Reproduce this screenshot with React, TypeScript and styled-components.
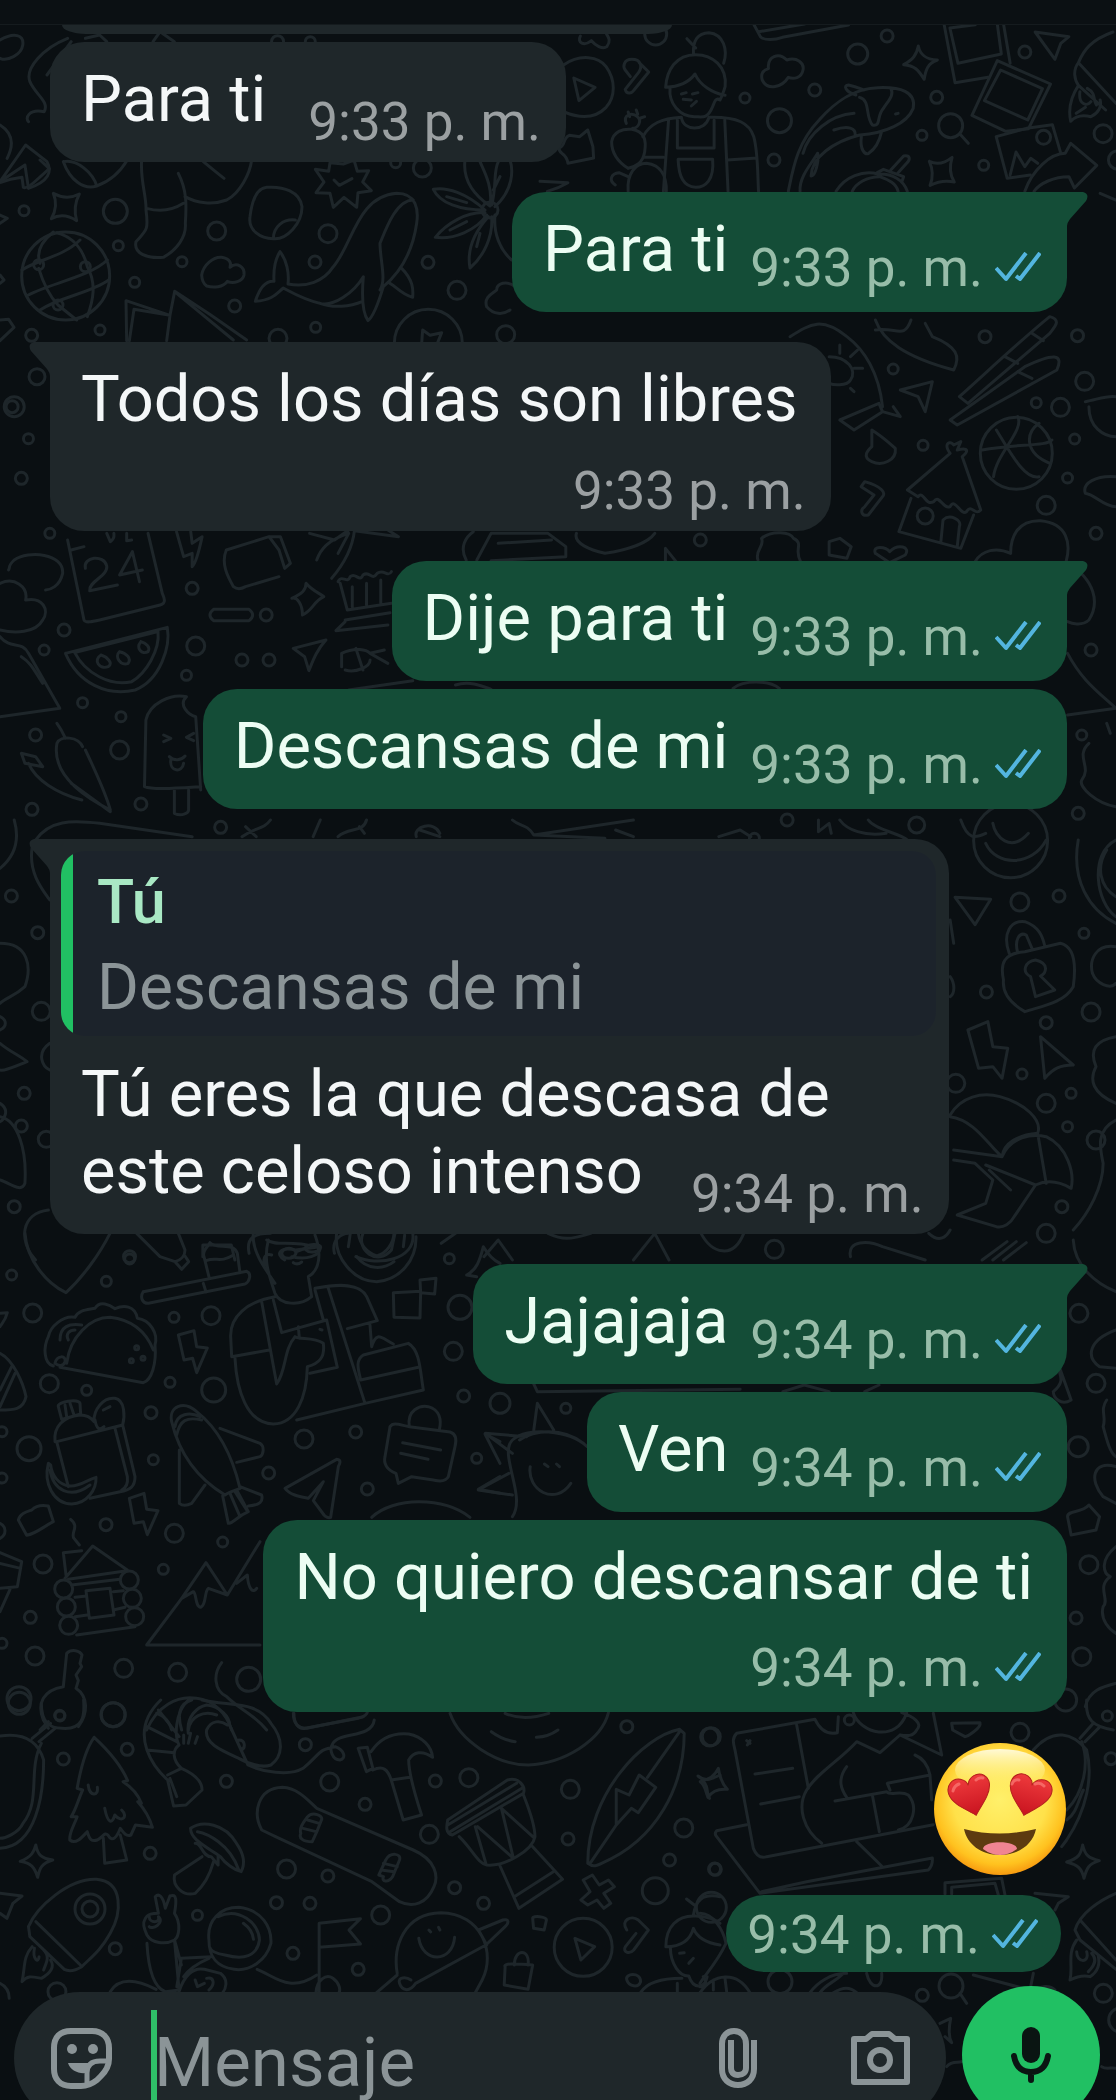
import React from "react";
import styled, { createGlobalStyle, css } from "styled-components";

const color = {
  page: "#0a0f12",
  line: "#1e262a",
  incoming: "#1f272a",
  outgoing: "#144d37",
  quote: "#1c232b",
  accent: "#21c063",
  tick: "#53b5df",
  textIn: "#f4f7f8",
  textOut: "#ecfdf3",
  timeIn: "#9ba0a2",
  timeOut: "#98bda9",
  muted: "#8b9497",
};

const GlobalStyle = createGlobalStyle`
  * { box-sizing: border-box; }
  body {
    margin: 0;
    background: ${color.page};
    font-family: Roboto, "Noto Sans", sans-serif;
  }
`;

const Screen = styled.div`
  position: relative;
  display: flex;
  flex-direction: column;
  height: 100vh;
  overflow: hidden;
  background: ${color.page};
`;

const WallpaperArt = styled.svg`
  position: absolute;
  inset: 0;
  width: 100%;
  height: 100%;
  fill: none;
  stroke: ${color.line};
  stroke-width: 3;
  stroke-linecap: round;
  stroke-linejoin: round;
`;

const TopEdge = styled.header`
  position: relative;
  flex: none;
  height: 25px;
  background: #0b1013;
  border-bottom: 1px solid #151b1e;
`;

const Thread = styled.main`
  position: relative;
  flex: none;
  display: flex;
  flex-direction: column;
  gap: 30px;
  padding: 0 49px 0 50px;
`;

const Group = styled.section<{ $mine?: boolean }>`
  display: flex;
  flex-direction: column;
  gap: 8px;
  align-items: ${(p) => (p.$mine ? "flex-end" : "flex-start")};
`;

const ScrolledBubble = styled.div`
  width: 60%;
  height: 9px;
  margin-left: 12px;
  border-radius: 0 0 24px 24px / 0 0 9px 9px;
  background: ${color.incoming};
`;

const BubbleBox = styled.article<{ $mine?: boolean; $tail?: boolean }>`
  position: relative;
  display: flex;
  flex-direction: column;
  border-radius: 34px;
  ${(p) =>
    p.$mine
      ? css`
          padding: 19px 26px 12px 31px;
          background: ${color.outgoing};
          color: ${color.textOut};
          border-top-right-radius: ${p.$tail ? 0 : 34}px;
        `
      : css`
          padding: 19px 25px 8px 31px;
          background: ${color.incoming};
          color: ${color.textIn};
          border-top-left-radius: ${p.$tail ? 0 : 34}px;
        `}
`;

const TailShape = styled.svg<{ $mine?: boolean }>`
  position: absolute;
  top: 0;
  ${(p) => (p.$mine ? "left: 100%;" : "right: 100%; transform: scaleX(-1);")}
  width: 21px;
  height: 34px;
  fill: ${(p) => (p.$mine ? color.outgoing : color.incoming)};
`;

const Body = styled.div<{ $mine?: boolean; $stacked?: boolean; $wide?: boolean }>`
  display: flex;
  flex-direction: ${(p) => (p.$stacked ? "column" : "row")};
  align-items: flex-end;
  justify-content: space-between;
  column-gap: ${(p) => (p.$mine ? 22 : p.$wide ? 48 : 42)}px;
  row-gap: ${(p) => (p.$mine ? 9 : 6)}px;
`;

const Words = styled.p<{ $mine?: boolean; $last?: boolean }>`
  margin: 0;
  font-size: 65px;
  line-height: 77px;
  white-space: nowrap;
  padding-bottom: ${(p) => (p.$last ? (p.$mine ? 12 : 16) : 0)}px;
`;

const StackedWords = styled(Words)`
  align-self: flex-start;
  padding-right: 8px;
`;

const Stamp = styled.footer<{ $mine?: boolean }>`
  display: flex;
  align-items: center;
  gap: 12px;
  font-size: 53px;
  line-height: 63px;
  white-space: nowrap;
  color: ${(p) => (p.$mine ? color.timeOut : color.timeIn)};
`;

const TickArt = styled.svg`
  width: 46px;
  height: 30px;
  margin-bottom: 3px;
  fill: none;
  stroke: ${color.tick};
  stroke-width: 4;
  stroke-linejoin: round;
`;

const Quote = styled.blockquote`
  display: flex;
  flex-direction: column;
  gap: 10px;
  margin: -7px -12px 20px -20px;
  padding: 13px 25px 10px 36px;
  border-radius: 24px;
  background: linear-gradient(to right, ${color.accent} 12px, ${color.quote} 12px);
`;

const QuoteAuthor = styled.cite`
  font-size: 61px;
  font-style: normal;
  font-weight: 500;
  line-height: 76px;
  color: #a9e8c4;
`;

const QuoteText = styled.p`
  margin: 0;
  font-size: 64px;
  line-height: 76px;
  color: ${color.muted};
`;

const Emoji = styled.svg`
  display: block;
  width: 134px;
  height: 134px;
`;

const TimePill = styled.div`
  margin: 11px 6px 0 0;
  padding: 9px 23px 5px 21px;
  border-radius: 39px;
  background: ${color.outgoing};
`;

const Composer = styled.form`
  position: relative;
  flex: none;
  display: flex;
  align-items: flex-end;
  gap: 16px;
  margin-top: 14px;
  padding: 0 16px 0 14px;
`;

const Field = styled.div`
  flex: 1;
  min-width: 0;
  display: flex;
  align-items: center;
  height: 132px;
  padding: 0 36px 0 37px;
  border-radius: 66px;
  background: ${color.incoming};
`;

const IconButton = styled.button`
  flex: none;
  display: flex;
  padding: 0;
  border: 0;
  background: none;
  color: ${color.muted};
  svg {
    display: block;
    fill: none;
    stroke: currentColor;
  }
  & + & {
    margin-left: 94px;
  }
`;

const Caret = styled.span`
  position: relative;
  flex: none;
  width: 6px;
  height: 96px;
  margin: 0 -3px 0 39px;
  background: #2fbf68;
`;

const TextInput = styled.input`
  flex: 1;
  min-width: 0;
  height: 96px;
  padding: 8px 0 0;
  border: 0;
  outline: 0;
  background: none;
  color: ${color.textIn};
  font-family: inherit;
  font-size: 69px;
  &::placeholder {
    color: ${color.muted};
    opacity: 1;
  }
`;

const MicButton = styled.button`
  flex: none;
  display: flex;
  align-items: center;
  justify-content: center;
  width: 138px;
  height: 138px;
  padding: 0;
  border: 0;
  border-radius: 50%;
  background: ${color.accent};
`;

/* Each sheet of doodles has its own origin and drawing scale. */
type Sheet = {
  at: [number, number];
  scale: [number, number];
  dots: [number, number, number][];
  lines: string[];
};

const T = 1 / 3;

const sheets: Sheet[] = [
  {
    at: [0, 160],
    scale: [T, T],
    dots: [
      [72, 152, 5], [346, 154, 12], [355, 257, 5], [404, 367, 5], [546, 305, 5], [650, 213, 9],
      [704, 438, 6], [300, 510, 5], [95, 526, 6], [984, 221, 9], [945, 306, 6], [1284, 307, 6],
      [1371, 391, 9], [947, 502, 5], [1267, 24, 9], [1187, 8, 5], [1517, 524, 9], [197, 348, 44],
      [116, 314, 5], [256, 320, 5], [174, 435, 5], [1470, 150, 8], [834, 535, 9], [1285, 550, 34],
    ],
    lines: [
      "M160 100Q200 122 238 102Q218 140 230 182Q190 156 154 176Q176 138 160 100Z",
      "M0 68Q30 56 66 52L70 82Q80 88 110 60L148 26L120 0",
      "M190 5C210 60 250 90 290 78C340 60 370 20 382 0M190 5C230 -5 280 40 290 78",
      "M425 0C420 60 440 110 438 150C446 210 440 210 408 245C400 280 440 296 490 292C530 270 560 230 556 190C560 130 560 90 535 40M440 145Q500 162 550 130M555 110C590 130 640 135 680 120C720 100 750 40 755 0M610 5Q640 30 672 55",
      "M800 82C850 78 900 95 906 140C906 190 860 240 820 236C780 236 744 210 750 170C756 120 770 85 800 82M820 236C820 200 850 176 886 180",
      "M946 28L986 34L990 8L1030 12L1062 0L1072 34L1106 32L1088 66L1114 92L1074 98L1070 142L1032 112L1000 142L990 100L948 98L972 66ZM1002 60L1018 76L1056 56",
      "M840 275C860 300 868 340 864 372C920 382 970 366 1000 320C1060 250 1070 110 1190 100C1250 100 1256 150 1250 190C1240 260 1210 330 1150 380C1138 420 1120 470 1104 482C1088 460 1084 420 1090 350C1060 400 1000 440 960 430C910 418 880 400 850 384C830 400 820 420 766 424C780 380 800 362 822 364C820 330 824 300 840 275M1240 120C1190 120 1160 200 1140 250C1140 300 1160 360 1140 390M1205 325C1240 360 1240 390 1238 412C1200 400 1190 380 1170 370M960 430C1000 445 1050 440 1088 424",
      "M1470 138C1400 90 1390 40 1395 0M1470 138C1480 80 1450 30 1440 5M1475 135C1490 80 1480 30 1495 5M1485 140C1540 90 1540 30 1530 0M1455 150C1400 100 1340 80 1300 88C1320 130 1380 150 1455 150M1455 158C1400 155 1340 190 1306 232C1360 240 1430 210 1460 165M1465 170C1420 220 1400 270 1410 324C1450 290 1480 230 1475 170M1485 165C1480 220 1500 270 1535 300M1340 110L1400 128M1350 210L1400 185M1430 260L1440 220M1500 50L1480 90",
      "M66 330C110 300 190 290 240 240M85 405C150 370 270 350 322 300M120 450C180 410 270 400 326 360M120 310C105 270 130 240 160 216M170 218C220 230 250 270 262 320C290 370 280 420 262 470M116 325C130 370 150 410 174 435L230 480",
      "M605 345C610 315 640 290 665 292C690 296 695 310 690 322C710 305 735 320 732 345C728 365 700 372 682 364C670 382 640 384 620 378Q606 368 605 345",
      "M380 542L378 422L510 466L500 542M388 542L402 448L510 466L524 394L628 462L740 540M530 400L700 540",
      "M1265 550L1268 510L1290 526L1325 518L1312 550",
      "M1460 440C1450 410 1480 400 1490 390C1490 370 1520 360 1545 380M1460 440C1480 465 1510 465 1530 450",
      "M0 480L26 478L42 502L0 542M0 165L22 175L0 190M0 345L12 360L0 370",
    ],
  },
  {
    at: [540, 20],
    scale: [0.3673, T],
    dots: [
      [558, 234, 5], [652, 302, 12], [637, 420, 6], [748, 210, 6], [865, 102, 10], [945, 48, 6],
      [1080, 232, 6], [1040, 346, 5], [1208, 436, 5], [1320, 96, 6], [1533, 341, 9], [1118, 317, 12],
      [1371, 352, 7], [1572, 420, 9], [315, 42, 11],
    ],
    lines: [
      "M64 135C110 100 160 110 180 140C206 180 206 230 180 262C150 296 110 296 66 276M92 174L150 202L106 242Z",
      "M250 118C275 118 280 140 268 158L232 208C236 225 250 220 256 210L296 156L270 128M250 118C228 118 225 140 232 150L246 170",
      "M342 202C345 150 370 104 424 104C470 104 510 140 504 200C500 215 495 230 490 240C478 230 474 250 470 260C455 300 440 290 420 290C380 290 350 250 354 204M342 202C390 200 410 180 422 162C435 195 470 220 504 226M418 104C415 60 430 40 460 38C500 42 512 90 500 130M400 56L424 84M385 222L398 218M415 222L430 218M412 258L426 244M390 238L412 240",
      "M280 350C300 310 330 296 385 292C390 335 450 335 460 292C540 290 570 310 582 350C594 400 592 460 595 514M350 300L336 514M503 300L512 514M374 300V384H474V300M376 418H470C475 480 450 502 424 502C390 500 378 470 376 418M284 412H336M510 420L590 414",
      "M240 445C205 420 195 390 195 365C200 335 225 325 250 328C285 335 290 360 285 395C280 430 260 440 240 445M235 310C225 285 250 275 265 290C280 305 265 325 252 325M240 514C236 460 260 430 290 430C330 435 345 470 344 514M205 495C185 480 195 460 215 458L240 470M262 270L266 282M285 290L274 294M240 276L244 290",
      "M605 180C600 160 608 150 622 146C618 110 650 95 672 120C700 110 720 130 716 150C712 175 690 178 676 172C660 200 620 215 605 180",
      "M676 514C690 440 700 370 760 300C800 250 850 205 920 203C980 200 1025 215 1016 265C1000 310 940 340 870 345C800 365 740 410 738 468C750 470 760 420 756 400M860 225C830 215 825 195 840 195C860 200 870 205 882 210M870 232C900 240 885 290 905 315C930 320 915 290 935 265C950 240 965 225 955 205M855 280C790 285 730 340 716 400M800 330C840 315 860 325 858 345M875 350C870 390 885 405 895 400C915 385 925 360 930 335M708 514C705 470 740 430 756 400M968 282L975 280",
      "M806 514C830 470 880 450 920 462C960 460 990 480 1000 514M850 514C860 490 890 470 925 470C950 480 970 490 975 514M918 458L935 448L990 470L985 486M955 450L990 408C1010 405 1008 420 998 430L972 462",
      "M1030 78C1035 105 1050 118 1082 120C1055 130 1050 150 1046 178C1030 150 1020 136 990 134C1016 118 1025 105 1030 78",
      "M1060 424Q1090 440 1122 412Q1110 455 1128 486Q1095 478 1062 496Q1075 460 1060 424",
      "M1100 12L1130 188L1220 172M1116 24L1138 130L1256 102L1245 12M1116 24L1185 14M1262 12L1280 130",
      "M1245 122L1390 192L1330 326L1268 334L1176 286ZM1254 150L1368 206L1328 300L1210 242Z",
      "M1325 325L1395 314L1418 400M1325 325L1242 350L1272 475L1335 465M1280 465L1296 396L1320 440L1336 415L1355 430M1145 344L1166 370",
      "M1320 514C1340 450 1390 400 1430 400L1445 370L1516 436L1455 504L1440 470C1400 470 1360 490 1345 514",
      "M1348 36L1440 50L1418 70L1402 118Z",
      "M1560 36C1500 60 1480 90 1466 128C1450 150 1455 180 1466 196L1540 270M1466 128L1568 250M1466 196C1440 240 1440 280 1445 304C1460 285 1480 285 1500 290C1520 280 1530 260 1525 240M1470 215C1465 255 1490 260 1500 245M1490 205C1515 220 1505 240 1515 255M1460 280L1485 262",
      "M110 48C100 68 120 80 140 62C150 75 170 90 182 80C195 60 185 50 180 40",
      "M583 15L600 50C610 62 640 60 660 52L840 15M596 35L720 12",
      "M80 346C60 355 72 375 52 384C50 405 72 395 76 430L146 414L144 380L130 330L108 350Z",
      "M0 484L76 488Q50 505 20 514M1525 520L1568 540",
    ],
  },
  {
    at: [0, 25],
    scale: [0.7117, T],
    dots: [[17, 1145, 6], [390, 50, 6], [436, 50, 5]],
    lines: [
      "M0 45C20 20 34 30 32 60C30 90 10 110 0 100M95 40C60 70 35 130 42 170C50 210 70 230 62 260C40 250 35 280 40 290M100 50L66 150M0 300C15 320 22 350 10 400M0 470L36 360L66 410C74 440 68 470 40 490L35 420L0 470",
      "M120 40L140 30L150 50M215 50L225 20L245 50",
    ],
  },
  {
    at: [0, 320],
    scale: [0.7117, T],
    dots: [
      [52, 170, 8], [20, 260, 10], [40, 356, 5], [30, 475, 6], [70, 640, 5], [270, 805, 6],
      [374, 885, 6], [340, 1020, 6], [378, 1020, 6], [275, 978, 9], [262, 1066, 5], [62, 990, 5],
      [90, 930, 6], [116, 1148, 5], [170, 1190, 5], [168, 1290, 9], [50, 1245, 6], [45, 1468, 6],
      [198, 1452, 6], [1384, 50, 6], [1255, 147, 5], [1514, 47, 6], [1524, 184, 9], [1456, 248, 5],
      [1490, 262, 9], [1510, 357, 5], [1297, 376, 5], [1428, 400, 36], [1300, 588, 8], [1470, 556, 9],
      [1500, 474, 5], [1540, 640, 6], [984, 660, 6], [1520, 1245, 5], [1515, 1480, 6], [1533, 990, 6],
    ],
    lines: [
      "M95 660L118 900C120 910 130 905 140 900L225 855C235 850 230 830 228 820L208 640M100 690L118 680M150 640L155 665C162 655 160 645 160 640M178 640V662L185 660",
      "M120 745C116 710 146 702 150 738C152 768 124 785 126 812L165 795M186 695L168 765L200 750M186 695L196 785",
      "M248 635L258 710L270 700V740C275 730 280 690 284 650L270 670L268 635",
      "M318 690L378 650L394 650L408 730L400 745L392 690L378 650M318 690C310 730 320 770 328 800Q335 812 345 800L392 770",
      "M430 790C440 815 450 820 455 830C440 845 440 870 425 885C425 855 418 830 410 835C425 820 430 810 430 790",
      "M300 868H350Q360 885 350 902H300Q290 885 300 868",
      "M92 1000L235 922C240 980 225 1080 190 1110C150 1130 110 1090 92 1000M105 998L222 935C225 990 205 1060 185 1085C155 1100 120 1060 105 998M142 1005C130 1020 140 1050 152 1040C160 1030 150 1010 142 1005M168 995C160 1010 170 1040 180 1030C185 1015 178 1000 168 995M198 965C190 985 200 1005 208 995C212 980 205 970 198 965",
      "M412 985L458 960C445 990 440 1020 434 1052L428 1010Z",
      "M435 640L470 660L490 630M445 720C450 690 460 660 490 640L475 700M466 775C480 740 495 690 498 632L560 650L545 630M475 785C480 760 488 795 492 770C500 755 505 790 510 765C520 750 522 785 530 760C540 745 545 775 550 755M478 790L488 870L550 850M495 800V860M515 790V855M535 780V850M485 900L548 878M485 905L472 932L545 915M480 1040V1000C500 980 515 990 520 1000L540 990M485 1050C500 1060 520 1040 520 1020M500 985L510 1050M520 1000L545 1030",
      "M20 720C40 690 90 700 88 760C84 800 70 810 64 810M20 720C10 740 15 740 12 750M0 790C20 770 40 800 36 840C60 830 70 870 60 900C50 940 20 940 0 930M0 1190L84 1165L40 1000C30 960 15 990 0 950M30 1010C45 1030 50 1060 60 1090",
      "M205 1200C210 1150 240 1120 262 1130C250 1155 265 1185 275 1190L282 1410M205 1200L203 1400C215 1410 245 1405 282 1400M245 1410V1480C255 1490 265 1480 265 1470V1410M230 1245L240 1255L230 1265M272 1240L262 1252L272 1262M238 1310C245 1325 255 1320 260 1308M240 1320C238 1355 256 1360 258 1330",
      "M80 1210C90 1240 90 1250 92 1255M80 1270C85 1245 110 1250 116 1280M80 1270C75 1330 90 1400 155 1470C150 1430 140 1380 120 1290M40 1330C50 1380 80 1420 115 1440M30 1300L50 1310L60 1340L35 1330ZM100 1390L155 1475",
      "M1110 50C1140 10 1155 -10 1190 50C1215 90 1235 160 1240 260M1230 0C1240 60 1270 110 1340 150C1350 110 1345 80 1310 50L1300 10M1230 30C1260 20 1270 60 1280 0",
      "M1265 210L1310 185L1300 275L1290 230Z",
      "M1348 230C1400 130 1440 50 1475 -10C1492 0 1482 20 1475 40L1360 250ZM1335 300L1440 140C1480 100 1495 100 1485 150L1345 315ZM1412 110L1430 130M1450 40L1466 62M1430 155L1450 175",
      "M1380 390C1430 370 1470 380 1478 360M1400 330C1420 400 1440 480 1460 470M1430 290C1440 330 1400 400 1396 470M1460 310C1440 340 1440 400 1475 430",
      "M1165 110C1190 110 1205 150 1195 180C1190 200 1170 195 1165 190M1180 75V100M1205 90L1195 110M1200 145H1212M1195 205L1200 215",
      "M1180 300L1235 250L1240 275L1200 330ZM1240 275L1265 290L1255 260M1225 330C1240 350 1250 370 1258 385C1260 420 1240 440 1225 425C1210 410 1220 390 1225 380Z",
      "M1275 510L1335 400C1325 370 1335 360 1340 375L1350 365L1345 390C1365 380 1358 400 1352 410L1378 570C1370 590 1365 550 1358 575C1350 590 1342 530 1335 560C1325 570 1320 520 1312 545C1300 560 1298 510 1290 530L1275 510M1280 535L1263 635L1350 685L1368 585M1322 665L1325 600C1335 580 1352 600 1348 620L1345 680",
      "M1215 485C1240 500 1245 520 1240 530L1220 585C1210 590 1208 570 1215 560L1228 525L1210 500Z",
      "M1525 245C1540 240 1555 225 1568 230M1530 260C1530 320 1550 350 1568 350M1568 470C1540 465 1520 490 1525 520C1540 525 1550 560 1568 560",
      "M1420 700C1420 650 1430 600 1462 602C1500 610 1505 670 1498 725M1370 725C1380 690 1400 680 1420 700M1498 725C1540 780 1545 850 1530 900C1520 920 1505 910 1500 905M1500 1000C1520 1080 1540 1110 1568 1165L1500 1185",
      "M1165 665L1180 655L1196 680L1190 715L1165 705ZM1230 700C1225 675 1245 680 1250 695C1262 670 1280 680 1272 705L1250 728L1230 700M1065 720C1060 690 1075 680 1070 655C1085 630 1110 635 1115 655C1130 670 1115 690 1125 725M655 720C645 680 655 650 665 635M670 720L690 640H770L795 680V710L690 722M700 670L775 660M810 640C805 670 830 690 850 700C880 690 910 670 920 640M935 725V685L950 725M580 1082L490 1110M640 1095C660 1080 680 1100 690 1108M1030 1105C1045 1080 1080 1080 1095 1105",
      "M1530 1270C1510 1310 1535 1340 1520 1380C1515 1400 1540 1450 1568 1460M1555 1210L1560 1240",
    ],
  },
  {
    at: [0, 820],
    scale: [0.7117, T],
    dots: [
      [16, 228, 6], [53, 338, 6], [58, 574, 9], [34, 820, 6], [30, 918, 6], [65, 958, 8],
      [20, 1160, 6], [310, 22, 6], [1060, 55, 5], [1106, 0, 6], [1433, 246, 9], [1488, 228, 6],
      [1523, 340, 5], [1386, 516, 6], [1533, 576, 9], [1470, 608, 6], [1436, 762, 5], [1343, 790, 9],
      [1470, 850, 9], [1505, 820, 5], [1500, 920, 5], [1540, 960, 9], [1492, 1160, 6], [1470, 1240, 9],
      [1288, 15, 8], [1420, 62, 37], [182, 1310, 6], [1088, 1288, 9],
    ],
    lines: [
      "M20 0C28 60 20 110 0 145M50 60C70 0 100 0 140 10L270 50M45 85C40 160 60 210 70 240M0 370C40 370 45 440 35 500C20 530 10 530 0 550M0 590C10 600 10 620 0 630M0 670C10 690 30 710 38 725C20 740 5 755 0 750M70 670C50 700 60 740 70 750M0 890C25 900 38 990 35 1090C30 1120 15 1090 0 1080M68 1170C30 1180 25 1260 50 1320M0 850C15 870 5 900 0 905",
      "M340 50C360 20 370 30 380 0M345 20L360 50M440 50L450 0M475 50C490 20 510 40 515 0M505 20L512 40M585 50C580 20 610 0 618 40M590 30L618 50M720 0C730 20 740 10 750 45L890 0M750 45L850 55M865 30L890 50M1010 50L1040 30L1055 50M1150 0V35L1165 10L1168 40M1180 0C1190 30 1215 50 1245 40M1220 0C1230 30 1265 40 1275 60",
      "M1395 10C1398 50 1420 100 1445 40M1350 0C1360 60 1370 55 1385 40M1385 70C1400 140 1450 140 1470 60",
      "M1342 232L1392 238L1370 314ZM1410 480C1405 430 1410 400 1440 395L1490 370C1510 380 1512 440 1508 500C1495 550 1460 560 1440 575C1420 550 1408 520 1410 480M1418 400C1408 340 1420 300 1440 305C1460 320 1465 350 1468 378M1430 398C1425 360 1432 335 1442 345L1450 385M1448 470C1435 455 1440 425 1455 420C1475 430 1470 460 1462 468L1482 510L1455 530Z",
      "M1360 630L1388 605L1395 680L1416 685L1408 775L1395 740L1375 745ZM1462 650L1508 735C1490 735 1480 745 1468 775Z",
      "M1335 885C1350 830 1380 815 1405 830C1440 850 1465 900 1458 940C1430 945 1410 970 1408 1010C1390 980 1370 900 1335 890M1408 1010C1420 950 1450 940 1470 950C1500 980 1510 1060 1505 1105C1485 1080 1470 1080 1455 1095L1425 1190C1420 1210 1410 1225 1400 1220L1345 1185L1385 1150L1395 1080L1370 1030L1340 1020M1385 1035L1455 1095M1408 1010L1340 990M1390 1050L1420 1110M1458 940L1470 1090",
      "M1568 60C1530 100 1540 250 1568 290M1555 90C1540 140 1545 200 1568 230M1515 60C1505 180 1530 270 1568 310M1568 380C1540 370 1530 420 1535 460C1540 490 1560 510 1568 490M1568 650C1540 660 1530 690 1540 740C1530 780 1535 820 1568 850M1568 900C1540 930 1545 980 1550 1030C1550 1100 1530 1180 1508 1230M1335 470C1342 490 1342 520 1335 530M1335 300L1340 370",
      "M285 1310V1275H325L330 1320M350 1300C345 1250 360 1240 380 1240M400 1320C385 1300 395 1280 415 1290L450 1280C450 1310 430 1320 410 1310M470 1300C465 1260 480 1240 490 1240M510 1240C500 1290 530 1340 550 1290L555 1240M580 1240C585 1320 530 1340 500 1310M620 1270L640 1240M680 1310L700 1260L720 1320M770 1240C790 1260 800 1260 830 1240M890 1320L920 1240L940 1320M985 1240C1000 1300 1030 1320 1045 1240M1195 1310C1190 1260 1220 1260 1240 1280L1300 1320M1305 1240C1320 1270 1330 1250 1335 1230M1380 1320L1415 1265M1395 1320L1428 1265M1410 1320L1442 1268",
    ],
  },
  {
    at: [0, 1230],
    scale: [T, T],
    dots: [
      [35, 135, 5], [389, 87, 5], [319, 154, 5], [98, 249, 9], [522, 262, 5], [633, 257, 9],
      [148, 461, 9], [260, 481, 5], [510, 457, 5], [641, 480, 12], [453, 548, 6], [87, 656, 12],
      [460, 689, 5], [806, 729, 6], [912, 627, 9], [1067, 606, 6], [1102, 777, 6], [1391, 498, 6],
      [1430, 685, 5], [1360, 364, 9], [1380, 232, 12], [1348, 86, 5], [318, 884, 6], [523, 910, 9],
      [668, 936, 5], [490, 1018, 5], [129, 1002, 9], [91, 1162, 6], [105, 1278, 9], [371, 1315, 9],
      [533, 1327, 9], [57, 1406, 12], [340, 1454, 12], [746, 1348, 12], [191, 1077, 9], [199, 1131, 9],
      [206, 1186, 9], [388, 1050, 9], [397, 1105, 9], [404, 1160, 9], [180, 1458, 5], [410, 353, 2],
      [394, 392, 2], [429, 385, 2], [1500, 520, 10], [6, 605, 5], [6, 744, 5], [6, 1240, 5],
    ],
    lines: [
      "M75 10C80 90 140 160 198 188C250 140 300 70 330 10",
      "M410 10L480 80L525 95C545 90 555 75 555 60L535 10M525 95L545 118L566 95L555 78",
      "M430 185L740 124C755 130 750 155 735 162L445 220C425 220 420 200 430 185M610 160L618 186M628 145L612 80C605 60 625 50 630 38C650 60 700 35 712 70L720 128M618 92C650 80 660 100 700 75",
      "M160 408C130 400 130 350 145 320C150 290 190 255 225 262C235 240 260 240 285 235C300 210 330 225 345 236C370 225 405 225 412 265C450 270 475 310 465 345C470 400 455 450 430 458L180 412M200 400C210 320 270 262 330 262C400 270 440 310 460 360M180 330C180 290 205 280 245 285M205 330C195 310 210 300 225 300M165 400C170 375 200 375 195 395C190 410 175 408 165 400",
      "M535 315L582 302L590 350L622 354L590 428L578 385L552 390Z",
      "M760 10C755 60 790 110 825 160M805 30C790 90 805 130 825 190C840 225 900 230 935 200L925 140C960 120 965 70 945 15M845 70C850 50 885 50 888 70C880 90 850 90 845 70M890 65L915 55C920 40 960 40 962 52C960 65 930 72 918 60M880 98Q892 106 905 96M795 105C785 80 800 70 815 75M800 30C830 50 870 30 945 50",
      "M825 200C740 215 690 260 692 320L695 380L808 360M705 385C710 480 740 580 820 582C890 580 920 500 922 410C960 400 975 380 970 340C940 320 900 330 885 320C850 360 860 420 830 462L785 215M820 210L845 308L980 270L1012 412L930 430M895 290L898 325M945 175C1020 160 1080 160 1100 200L1132 272L1042 296M945 180L970 270M985 175L1095 520M1110 285L1115 350M890 570L1095 520L1270 480C1260 420 1260 360 1225 340L1090 375C1065 390 1075 420 1082 450L1255 412M1115 350C1130 300 1145 325 1180 342M960 298L966 300",
      "M1180 188L1262 184L1260 264L1182 262ZM1260 150L1308 145L1304 192L1262 188Z",
      "M1400 135C1430 120 1440 90 1450 50C1465 75 1480 90 1500 100M1400 135L1430 140",
      "M1010 10C1000 80 1060 155 1130 155C1200 150 1250 90 1248 20M1045 50C1050 20 1050 10 1052 10M1075 10C1080 50 1110 70 1130 78C1160 70 1180 40 1182 10M1070 80C1100 120 1150 120 1182 95M1210 50L1214 15",
      "M165 635C160 590 190 560 240 555C260 555 275 565 282 575C280 540 310 500 345 505C375 510 375 560 368 585L170 635L205 770M368 585L405 740C405 770 390 780 360 785L270 805M345 595L382 740C385 765 375 775 365 780M285 570C290 600 300 600 312 590M310 540L330 530M175 530C170 515 235 505 240 520L242 552L185 568ZM195 525L200 560M210 520L222 555",
      "M145 700C130 760 160 820 215 822C260 820 290 780 288 742C260 750 240 770 210 768C175 765 155 735 152 705ZM150 720C160 780 210 810 270 765",
      "M515 575C505 530 550 510 590 545C660 600 700 690 720 775C710 780 690 785 675 795C600 750 540 680 515 575M530 615C540 570 560 560 605 570M525 590C530 550 570 545 600 560M660 595L780 640C795 650 790 675 780 680L710 697M538 660V820C550 830 565 825 575 820L615 765M668 798L685 880C700 880 710 860 745 845L710 780M690 790L720 860M720 770L785 795C790 815 780 825 745 828M705 785L740 840",
      "M855 775L1010 688C1025 690 1020 700 1015 710L992 862C985 865 975 860 972 855L940 812L970 755L925 805C900 800 870 795 855 775",
      "M1170 590C1180 575 1200 585 1228 590L1350 606C1370 612 1370 630 1365 650L1345 740C1335 760 1310 752 1300 750L1235 740L1195 760L1188 730C1160 720 1150 700 1155 680ZM1228 590C1220 540 1260 525 1285 530C1320 540 1325 570 1318 600M1208 638L1322 660M1202 670L1284 688",
      "M1115 862C1180 800 1330 800 1410 862M1500 700L1455 612L1500 635M1500 740L1435 778L1500 790",
      "M55 870C60 850 80 845 95 840C110 825 130 825 145 828L160 875C130 890 110 910 80 916Z",
      "M388 805L432 790L440 838L474 842L442 914L430 875L402 880Z",
      "M212 868C240 890 210 910 222 925L238 945M190 968L245 962M190 968L198 1035M195 1045L278 948L382 1020M205 1048L380 1022M215 1065L360 1048M225 1102L260 1098M340 1085L370 1082M225 1160L262 1155M340 1140L375 1132M258 1082L330 1075L342 1155L268 1165ZM230 1215L405 1190",
      "M780 1245H440L545 1105L618 998L682 1095L780 935M545 1105L580 1085C590 1090 585 1130 602 1132C620 1125 612 1085 625 1075L682 1095M710 1060L742 1035C745 1080 760 1090 770 1075",
      "M190 1370L200 1270C215 1255 240 1262 246 1275L240 1300L245 1310L228 1335L235 1352L228 1375C265 1400 265 1450 235 1490M190 1370C130 1380 110 1420 130 1470L145 1495M120 1500L145 1475",
      "M665 1298C640 1330 640 1380 680 1400C720 1440 760 1450 800 1500M440 1500C470 1430 530 1395 590 1405C640 1410 680 1450 695 1500M470 1450C500 1460 510 1480 515 1500M545 1500C530 1450 540 1420 575 1410M565 1500C570 1460 610 1440 650 1455M880 1450C880 1480 895 1495 920 1495L1090 1460",
      "M0 370C40 390 70 460 78 500C70 540 40 540 0 540M35 410L0 480M45 430L0 530M0 250L22 248C15 275 5 280 0 290M0 880C20 890 20 915 0 925M0 968L65 995L52 1070L0 1075M0 1000L62 1015M30 1078L0 1145",
    ],
  },
  {
    at: [0, 1240],
    scale: [0.7117, T],
    dots: [[1516, 220, 9], [1540, 430, 9], [1515, 620, 10], [1530, 974, 9], [1512, 1134, 6], [1520, 1250, 9], [795, 505, 5]],
    lines: [
      "M1508 0C1510 80 1540 130 1568 155M1568 270C1530 300 1525 350 1545 380L1568 385M1555 480C1545 510 1555 530 1550 560C1555 600 1560 640 1568 650M1568 680C1535 660 1530 720 1550 770L1568 790M1500 830C1500 810 1520 820 1530 795L1545 830L1540 870L1505 885ZM1568 920C1545 960 1550 1000 1560 1010C1540 1040 1560 1080 1550 1100C1545 1140 1560 1170 1568 1180M1568 1330C1550 1340 1530 1350 1525 1400",
      "M750 432L755 455L1040 448M1100 455L1130 435L1165 455M1215 455L1235 435M1480 455C1500 420 1485 400 1490 390L1505 480C1490 500 1480 470 1480 455",
      "M720 830C740 770 700 640 720 600C740 560 800 570 825 620M730 600C750 570 790 560 820 610M745 680C740 750 780 800 802 730M765 672L770 680M782 672L786 680M750 570L755 490L778 570M720 640L682 580L740 590M715 700L672 750L720 765",
    ],
  },
  {
    at: [0, 1700],
    scale: [0.4592, T],
    dots: [
      [246, 44, 12], [138, 177, 6], [277, 148, 6], [493, 244, 6], [327, 460, 6], [665, 134, 6],
      [718, 246, 9], [795, 313, 6], [948, 243, 6], [1021, 233, 9], [1242, 268, 9], [1365, 80, 6],
      [1549, 110, 9], [935, 403, 9], [1237, 417, 6], [1489, 384, 9], [1458, 480, 6], [624, 507, 9],
      [714, 528, 6], [602, 608, 6], [675, 610, 6], [990, 563, 6], [1053, 610, 6], [829, 645, 9],
      [1427, 572, 13], [430, 646, 5], [251, 746, 6], [638, 760, 6], [780, 808, 6], [124, 875, 9],
      [42, 10, 11], [196, 627, 15], [196, 627, 8], [1270, 742, 29], [1556, 507, 6], [130, 46, 5],
    ],
    lines: [
      "M0 108C40 100 80 110 95 180C95 280 80 440 0 445M90 130C60 210 90 300 50 370C40 400 10 415 0 415M70 115L110 70M85 125L120 85M90 10C90 70 110 85 135 85C180 90 185 50 182 0",
      "M205 112C185 150 175 210 168 265L180 270C170 300 165 330 155 350H168C160 380 150 400 152 420C165 435 180 410 190 395C195 420 200 425 212 420C225 410 228 395 235 405C245 430 255 410 262 385C270 400 275 410 285 405L295 375L332 382C325 350 310 320 300 305L308 310C300 280 285 260 268 245L278 242C262 190 235 150 205 112M225 415L228 490L276 480L262 405M192 255C195 290 215 290 212 262M228 325C235 375 245 370 250 345C265 370 280 350 265 330",
      "M78 435C82 465 90 475 115 480C90 490 86 505 82 532C75 500 68 490 44 484C70 470 74 455 78 435M0 580L48 588L28 610L15 655L0 640",
      "M62 680C80 620 150 535 210 538C270 545 265 640 240 700C220 750 200 770 178 800C160 815 150 815 140 808L65 710ZM78 665L175 795M70 740C50 770 55 800 48 845C60 825 70 830 90 835C110 820 120 800 110 780M75 745C70 780 85 790 85 770M95 750C110 770 100 790 95 810",
      "M350 0C320 40 305 90 320 150C330 190 345 215 365 240L378 318L405 315L440 270C440 240 420 220 395 205C375 180 375 150 390 135C380 110 380 40 410 0M365 225L395 205M370 235L385 290M320 150L380 158M320 80L385 125M345 30L390 110M400 130V105M410 130L415 100M425 130L430 110M440 0C500 20 560 0 590 70C620 120 615 170 590 195C570 205 540 190 520 175C480 150 445 130 450 90C460 60 480 60 495 75M410 100C405 50 430 20 450 15C480 20 500 50 500 75L540 195C570 215 630 230 660 205C700 160 690 150 730 140C750 150 755 175 740 180C725 180 715 150 725 130C740 95 810 115 815 60M520 120C535 120 535 145 525 150",
      "M640 40C640 70 650 90 665 85L780 55C795 50 800 40 800 36",
      "M780 145L800 142L812 205L798 215ZM808 155C830 110 860 98 890 102C920 110 940 140 942 172C920 150 900 155 890 180C890 220 905 290 918 345L878 360L852 240C845 210 835 195 812 210M852 240L892 232",
      "M980 40C1000 120 1080 195 1150 195C1230 190 1310 120 1325 38M1070 95Q1095 120 1122 125M1168 112Q1195 110 1215 90M1100 40Q1140 65 1195 40",
      "M975 360L1105 240C1130 230 1145 260 1140 280L985 405C970 400 972 380 975 360M975 375L1125 250M980 395L1140 262M1000 410C1030 450 1040 490 1060 495C1100 500 1160 450 1165 410C1165 370 1150 320 1140 285M1035 380L1058 490M1040 380L1118 475L1092 325L1162 412M1088 495L1130 625L1225 538L1160 440M1120 590L1205 515",
      "M1480 88C1400 110 1280 280 1280 490C1290 500 1295 500 1310 490C1430 420 1490 260 1490 100ZM1285 490L1342 375V268L1370 285L1392 225L1428 262L1390 338L1375 325L1342 375M1410 232L1480 95",
      "M415 385C440 360 490 370 515 430C530 460 535 490 525 515C510 510 490 490 480 470C450 440 415 420 415 385M430 395C450 400 500 430 520 510M425 430C440 430 440 470 460 470L475 495V465M440 470L380 525C375 560 400 590 425 580C450 550 460 510 465 485",
      "M570 390C550 340 560 265 615 262C650 265 670 300 690 325L900 450C950 480 955 530 945 560C930 610 900 625 870 605L810 545L600 410ZM655 400C650 380 665 360 670 350C680 335 705 345 700 360L690 395L680 425C660 425 650 415 655 400M670 360L695 370M660 385L688 395M825 525L840 480C850 455 875 460 870 480L855 530C845 550 830 545 835 530ZM835 490L865 500M830 510L858 515",
      "M315 660C320 640 335 640 345 640L338 590C345 580 355 585 360 625L370 588C385 580 385 600 380 640C395 670 390 710 380 720C360 735 330 730 320 705C315 690 310 670 315 660M325 650C325 670 350 670 345 650C360 670 330 690 325 680M320 730C322 780 330 860 360 875L390 870L380 720L395 795M395 775L460 770M395 775L385 860",
      "M455 720C450 660 480 622 520 622C570 630 592 680 590 730C580 780 545 815 510 808C470 800 455 770 455 720M475 650C520 620 565 670 565 720C560 770 530 780 490 765C470 760 460 755 458 745M530 670Q550 690 552 718M400 830C410 810 430 790 455 775M390 875C400 830 420 800 445 808L480 820C500 840 490 870 485 878M560 808C600 830 630 880 690 825M240 875C260 830 300 840 340 868M425 840L430 860L445 850M450 835C465 830 470 850 455 870",
      "M695 880V670L785 656L760 690L785 732L695 742M688 878C690 840 710 820 725 835C740 850 742 870 738 880",
      "M865 820C855 740 880 640 960 638C1050 640 1080 760 1050 840L1035 878M1042 690L1095 660C1110 655 1108 670 1100 680L1058 735L905 850C890 880 875 870 870 850C865 830 885 830 895 840M1042 690L1060 735M912 715C920 790 985 790 990 712M934 690L938 696M955 682L958 690M820 878L865 825",
      "M1160 655C1160 645 1190 650 1190 660L1185 690L1162 685ZM1252 715L1295 740L1265 780ZM1270 540L1290 525L1305 555L1325 540L1338 560L1315 580L1330 610L1315 625L1300 600L1280 615L1265 600L1285 575ZM1100 800C1095 790 1120 790 1160 795L1150 868L1098 855ZM1120 795C1120 745 1155 745 1150 795",
      "M1365 690C1350 660 1375 645 1390 660L1412 690L1380 750C1370 765 1355 755 1362 740L1385 700M1450 740C1450 680 1475 645 1515 648C1540 650 1560 660 1568 670M1450 740C1490 740 1505 710 1510 685C1520 720 1545 730 1568 735M1460 745C1460 790 1480 830 1500 828C1510 870 1535 865 1540 830M1510 645C1515 600 1530 580 1568 590M1495 597L1512 615M1395 878C1410 845 1450 835 1485 835M1475 850V880M1365 840C1360 820 1395 815 1395 845C1390 865 1370 860 1365 840M1500 790L1510 775M1480 760L1490 758",
      "M1520 228C1535 245 1545 240 1568 225M1525 245C1540 260 1535 285 1545 295M0 850C15 860 20 880 20 895",
    ],
  },
  {
    at: [700, 1700],
    scale: [T, T],
    dots: [
      [29, 111, 9], [46, 508, 6], [960, 97, 9], [1233, 176, 6], [1222, 48, 5], [1097, 0, 11],
      [34, 622, 15], [753, 858, 12], [667, 886, 6], [1210, 880, 9], [240, 845, 12], [448, 60, 5], [1262, 960, 12],
    ],
    lines: [
      "M110 100L345 58C360 90 380 105 412 98L415 50M110 100C95 115 100 130 105 150L160 445C170 470 185 475 200 470L700 374M290 75L325 265M165 222L278 205M182 312L298 290M140 122L150 130M150 122L142 135",
      "M460 38C480 100 590 130 620 38M605 38C640 50 670 70 650 90C640 110 620 108 600 105L540 158L470 125C420 180 350 220 320 270C290 320 310 390 365 430M600 105L725 165M700 40L725 165M440 200C410 240 425 270 440 292M405 303L560 275C570 290 600 270 625 285C655 320 640 380 595 390M570 270L562 250L690 225L695 300M645 165C670 175 685 200 690 225M518 290L538 395",
      "M140 374L50 392C45 398 45 405 50 410L180 580L685 510C695 500 698 485 697 474L320 545L185 575M470 425L545 498",
      "M755 70L840 68C845 85 800 110 795 110L758 90Z",
      "M1160 0C1155 60 1180 80 1240 90M1180 70L1140 115M1200 80L1155 125M1000 150C1060 80 1120 100 1160 150C1180 230 1160 330 1100 420L1085 440M1145 125C1170 190 1150 280 1100 330M1100 360C1130 340 1135 300 1150 270",
      "M1148 435C1155 465 1165 475 1198 482C1165 492 1160 505 1152 535C1145 505 1135 495 1100 486C1135 475 1142 465 1148 435M5 240C30 240 45 225 55 205C60 240 70 255 82 268C50 265 35 275 24 292C22 265 20 250 5 240",
      "M1005 580L1105 590L1075 610L1065 630M735 582V548L905 535L915 585M755 582V562L885 550L895 585M1248 580C1200 600 1140 640 1125 690L1140 720L1248 808M1140 660L1248 780M1130 720C1100 760 1120 800 1110 840C1130 830 1150 825 1170 830C1195 815 1200 790 1195 770M1130 755C1130 790 1170 790 1160 755M1175 760C1195 780 1180 800 1165 815",
      "M0 640C40 640 70 690 78 730C50 790 10 830 0 850M0 860C20 860 20 840 10 830M0 878C40 820 110 810 150 878M40 840V870M75 835L80 875M330 878C350 850 390 820 440 820M360 878C380 850 400 850 430 820M500 820C510 870 550 870 545 820M400 878C430 860 450 860 470 878M820 825L990 870L1000 820M780 880L800 910M1000 878C1020 855 1050 855 1065 870M720 970L752 955C745 990 745 1010 755 1028L735 1010M740 1100C755 1080 775 1090 785 1085M1205 1100C1220 1110 1235 1100 1248 1105",
    ],
  },
];

const Wallpaper = () => (
  <WallpaperArt viewBox="0 0 1116 2100" preserveAspectRatio="xMidYMin slice" aria-hidden="true">
    {sheets.map((s, i) => (
      <g key={i}>
        {s.dots.map(([x, y, r], j) => (
          <circle key={j} cx={s.at[0] + x * s.scale[0]} cy={s.at[1] + y * s.scale[1]} r={r} />
        ))}
        <g transform={`translate(${s.at.join(" ")}) scale(${s.scale.join(" ")})`}>
          {s.lines.map((d, j) => (
            <path key={j} d={d} vectorEffect="non-scaling-stroke" />
          ))}
        </g>
      </g>
    ))}
  </WallpaperArt>
);

const Ticks = () => (
  <TickArt viewBox="0 0 46 30" role="img" aria-label="Leído">
    <path d="M1 16L11 27L31 1M21 24L25 27L45 1" />
  </TickArt>
);

const Time = ({ value, mine }: { value: string; mine?: boolean }) => (
  <Stamp $mine={mine}>
    <time>{value}</time>
    {mine && <Ticks />}
  </Stamp>
);

type BubbleProps = {
  lines: string[];
  time: string;
  mine?: boolean;
  tail?: boolean;
  stacked?: boolean;
  quote?: { author: string; text: string };
};

const Bubble = ({ lines, time, mine, tail, stacked, quote }: BubbleProps) => {
  const last = lines[lines.length - 1];
  const Last = stacked ? StackedWords : Words;
  return (
    <BubbleBox $mine={mine} $tail={tail}>
      {tail && (
        <TailShape $mine={mine} viewBox="0 0 21 34" aria-hidden="true">
          <path d="M-1 0H16Q23 2 19 9L3 27Q0 31 0 34H-1Z" />
        </TailShape>
      )}
      {quote && (
        <Quote>
          <QuoteAuthor>{quote.author}</QuoteAuthor>
          <QuoteText>{quote.text}</QuoteText>
        </Quote>
      )}
      {lines.slice(0, -1).map((line) => (
        <Words key={line}>{line}</Words>
      ))}
      <Body $mine={mine} $stacked={stacked} $wide={lines.length > 1}>
        <Last $mine={mine} $last>
          {last}
        </Last>
        <Time value={time} mine={mine} />
      </Body>
    </BubbleBox>
  );
};

const heart =
  "M0 20C-6 13 -20 4 -21 -7C-22 -17 -13 -22 -6 -19C-2 -17 0 -14 0 -11C1 -15 4 -18 8 -19C16 -21 22 -15 21 -7C19 4 6 13 0 20Z";

const HeartEyes = () => (
  <Emoji viewBox="0 0 134 134" role="img" aria-label="Cara sonriente con ojos de corazón">
    <defs>
      <radialGradient id="face" cx="50%" cy="43%" r="57%">
        <stop offset="0" stopColor="#fff06a" />
        <stop offset="0.62" stopColor="#ffe14a" />
        <stop offset="0.86" stopColor="#ffc21f" />
        <stop offset="1" stopColor="#f79a10" />
      </radialGradient>
      <linearGradient id="shine" x1="0" y1="0" x2="0" y2="1">
        <stop offset="0" stopColor="#fffbe0" stopOpacity="0.95" />
        <stop offset="1" stopColor="#fff06a" stopOpacity="0" />
      </linearGradient>
      <linearGradient id="heart" x1="0" y1="0" x2="0" y2="1">
        <stop offset="0" stopColor="#ee3a3c" />
        <stop offset="1" stopColor="#c8131f" />
      </linearGradient>
    </defs>
    <circle cx="67" cy="67" r="66" fill="url(#face)" />
    <ellipse cx="67" cy="28" rx="45" ry="21" fill="url(#shine)" />
    <g fill="url(#heart)" stroke="#b3201c" strokeWidth="1">
      <path d={heart} transform="translate(38 54) rotate(-15)" />
      <path d={heart} transform="translate(96 54) rotate(15)" />
    </g>
    <g fill="none" stroke="#ff8a84" strokeWidth="3" strokeLinecap="round" opacity="0.6">
      <path d="M20 49Q21 44 26 42M43 38Q46 35 50 36M79 42Q81 37 86 38M102 42Q107 40 111 44" />
    </g>
    <path d="M31 87Q66 96 103 87C100 102 86 113 67 113C48 113 34 102 31 87Z" fill="#5d3b10" />
    <path d="M50 107C50 98 84 98 84 107Q76 113 67 113Q58 113 50 107Z" fill="#f08592" />
  </Emoji>
);

export default function App() {
  return (
    <Screen>
      <GlobalStyle />
      <Wallpaper />
      <TopEdge />
      <Thread>
        <Group>
          <ScrolledBubble />
          <Bubble lines={["Para ti"]} time="9:33 p. m." />
        </Group>
        <Group $mine>
          <Bubble mine tail lines={["Para ti"]} time="9:33 p. m." />
        </Group>
        <Group>
          <Bubble tail stacked lines={["Todos los días son libres"]} time="9:33 p. m." />
        </Group>
        <Group $mine>
          <Bubble mine tail lines={["Dije para ti"]} time="9:33 p. m." />
          <Bubble mine lines={["Descansas de mi"]} time="9:33 p. m." />
        </Group>
        <Group>
          <Bubble
            tail
            quote={{ author: "Tú", text: "Descansas de mi" }}
            lines={["Tú eres la que descasa de", "este celoso intenso"]}
            time="9:34 p. m."
          />
        </Group>
        <Group $mine>
          <Bubble mine tail lines={["Jajajaja"]} time="9:34 p. m." />
          <Bubble mine lines={["Ven"]} time="9:34 p. m." />
          <Bubble mine stacked lines={["No quiero descansar de ti"]} time="9:34 p. m." />
        </Group>
        <Group $mine>
          <HeartEyes />
          <TimePill>
            <Time mine value="9:34 p. m." />
          </TimePill>
        </Group>
      </Thread>
      <Composer onSubmit={(e) => e.preventDefault()}>
        <Field>
          <IconButton type="button" aria-label="Emojis y stickers">
            <svg width="61" height="61" viewBox="0 0 61 61" strokeWidth="6" strokeLinejoin="round">
              <path d="M20 3H41C52 3 58 10 58 20V31C58 38 55 43 50 48L46 52C41 56 36 58 30 58H20C9 58 3 51 3 41V20C3 9 9 3 20 3Z" />
              <path d="M57 33H49C40 33 36 37 36 45V57" strokeWidth="5" />
              <circle cx="21" cy="21" r="5" fill="currentColor" stroke="none" />
              <circle cx="42" cy="21" r="5" fill="currentColor" stroke="none" />
              <path d="M17 35H45C38 37 36 41 35 45C27 46 19 42 17 35Z" fill="currentColor" stroke="none" />
            </svg>
          </IconButton>
          <Caret />
          <TextInput type="text" placeholder="Mensaje" aria-label="Mensaje" />
          <IconButton type="button" aria-label="Adjuntar">
            <svg width="38" height="60" viewBox="0 0 38 60" strokeWidth="6">
              <path d="M35 12V41C35 51 28 57 19 57C10 57 3 51 3 41V16C3 8 8 3 15 3C22 3 27 8 27 16V40C27 44 24 47 19 47C14 47 12 44 12 40V12" />
            </svg>
          </IconButton>
          <IconButton type="button" aria-label="Cámara">
            <svg width="59" height="54" viewBox="0 0 59 54" strokeWidth="6" strokeLinejoin="round">
              <path d="M3 8H15L21 3H38L44 8H56V51H3Z" />
              <circle cx="29" cy="29" r="10" />
            </svg>
          </IconButton>
        </Field>
        <MicButton type="button" aria-label="Grabar mensaje de voz">
          <svg width="42" height="56" viewBox="0 0 42 56" fill="none" stroke="#0a1512" strokeWidth="6" strokeLinecap="round">
            <rect x="12" y="0" width="18" height="36" rx="9" fill="#0a1512" stroke="none" />
            <path d="M4 29C6 40 12 45 21 45C30 45 36 40 38 29M21 46V53" />
          </svg>
        </MicButton>
      </Composer>
    </Screen>
  );
}
